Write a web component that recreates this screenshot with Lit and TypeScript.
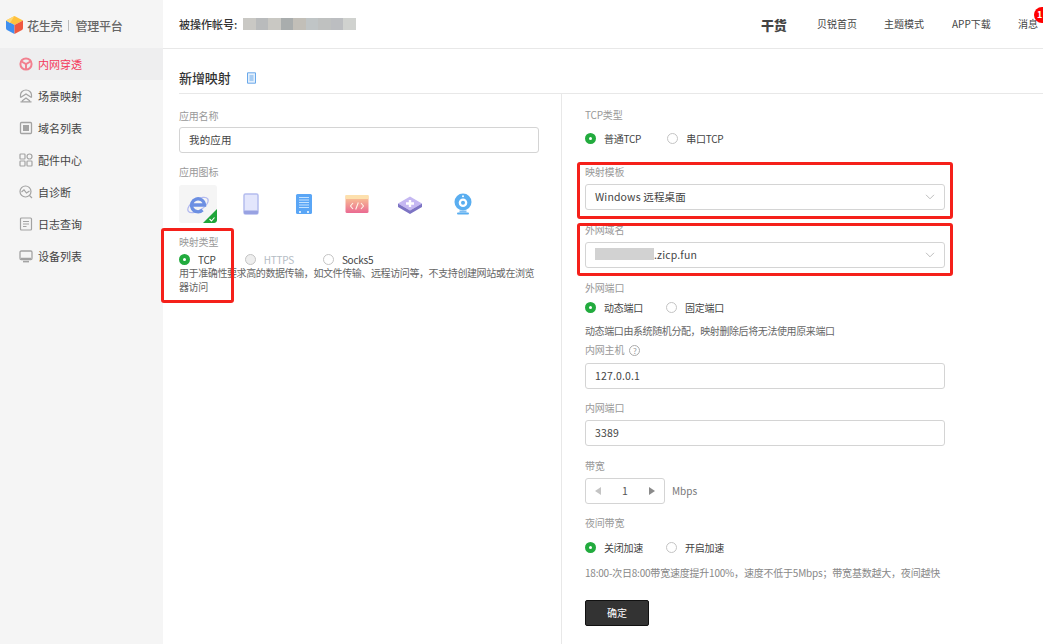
import { LitElement, html, css, svg } from "lit";
import { customElement } from "lit/decorators.js";

const NAV: [string, string, boolean?][] = [
  ["cube", "内网穿透", true],
  ["scene", "场景映射"],
  ["domain", "域名列表"],
  ["parts", "配件中心"],
  ["diag", "自诊断"],
  ["log", "日志查询"],
  ["device", "设备列表"],
];

const COMMA = "\uFF0C";
const SEMI = "\uFF1B";
const HELP_TYPE = `用于准确性要求高的数据传输${COMMA}如文件传输、远程访问等${COMMA}不支持创建网站或在浏览器访问`;
const HELP_PORT = `动态端口由系统随机分配${COMMA}映射删除后将无法使用原来端口`;
const HELP_NIGHT = `18:00-次日8:00带宽速度提升100%${COMMA}速度不低于5Mbps${SEMI}带宽基数越大${COMMA}夜间越快`;

const navIcon = (k: string, active?: boolean) => {
  const c = active ? "#f2808f" : "#a3a3a3";
  const body: Record<string, unknown> = {
    cube: svg`<circle cx="7" cy="7" r="5.6" stroke-width="2"/><path d="M2.5 4.5 7 7l4.5-2.5M7 7v5.5" stroke-width="2"/>`,
    scene: svg`<path d="M1.5 8.5V6A5.5 5 0 0 1 12.5 6v2.500" stroke-width="1.200"/><path d="M1.500 8.500 7 5l5.500 3.500M3 12l4-3 4 3M1.500 12.800h11" stroke-width="1.300"/>`,
    domain: svg`<rect x="1.500" y="1.500" width="11" height="11" rx="1" stroke-width="1.300"/><rect x="4.500" y="4.500" width="5" height="5" fill="${c}" stroke-width="1"/>`,
    parts: svg`<rect x="1" y="1" width="5" height="5" rx=".8" stroke-width="1.200"/><circle cx="10.500" cy="3.500" r="2.500" stroke-width="1.200"/><rect x="1" y="8" width="5" height="5" rx=".8" stroke-width="1.200"/><rect x="8" y="8" width="5" height="5" rx=".8" stroke-width="1.200"/>`,
    diag: svg`<circle cx="6.500" cy="6.500" r="5.500" stroke-width="1.200"/><path d="M2.500 7 5 4.800 7.500 8 10.500 6M10.500 10.500 13 13" stroke-width="1.200"/>`,
    log: svg`<rect x="1.500" y="1" width="11" height="12" rx="1" stroke-width="1.200"/><path d="M4 4.500h6M4 7h6M4 9.500h3.500" stroke-width="1.100"/>`,
    device: svg`<rect x="1" y="2" width="12" height="8.500" rx="1.200" stroke-width="1.300"/><path d="M4 12.600h6" stroke-width="1.600"/><path d="M2 9.500h10" stroke-width="1.500"/>`,
  };
  return html`<svg class="nav-icon" viewBox="0 0 14 14" fill="none" stroke=${c}>${body[k]}</svg>`;
};

const logo = html`<svg class="logo" width="17" height="18" viewBox="0 0 17 18">
  <path d="M8.500 0 17 4.500 8.500 9 0 4.500Z" fill="#ffc13d"/>
  <path d="M0 4.500 8.500 9v9L1 14Q0 13.400 0 12Z" fill="#3f8ff0"/>
  <path d="M17 4.500 8.500 9v9L16 14Q17 13.400 17 12Z" fill="#f0583f"/>
  <path d="M0 4.500 8.500 0 4 7Z" fill="#ffd873"/>
</svg>`;

const appIcons = [
  svg`<rect x="4" y="1" width="14" height="20" rx="1.500" fill="#e3e6fc" stroke="#b4bcee" stroke-width="1.500"/><rect x="4" y="17.500" width="14" height="3.500" rx="1" fill="#98a2e2"/>`,
  svg`<rect x="3" y="1" width="16" height="20" rx="1.500" fill="#5aa6f6"/><path d="M6 4.500h10M6 7h10M6 9.500h10M6 12h10M6 14.500h10" stroke="#c4e2ff" stroke-width="1.200"/><rect x="6" y="18" width="2" height="2" fill="#d5eaff"/><rect x="14" y="18" width="2" height="2" fill="#d5eaff"/>`,
  svg`<defs><linearGradient id="cg" x1="0" y1="0" x2="0" y2="1"><stop offset="0" stop-color="#fbcf94"/><stop offset="1" stop-color="#ea6a92"/></linearGradient></defs><rect x="-.5" y="2" width="23" height="18" rx="1.500" fill="url(#cg)"/><rect x="-.5" y="2" width="23" height="4" fill="#fde0ad"/><path d="M7 10l-2.500 3L7 16M15 10l2.500 3L15 16M12.300 9.500l-2.600 7" fill="none" stroke="#fff3e6" stroke-width="1.100"/>`,
  svg`<path d="M11 3.500 23 10.500 11 17.500-1 10.500Z" fill="#c5b8f2"/><path d="M-1 10.500V14L11 21 23 14V10.500L11 17.500Z" fill="#7d74c4"/><path d="M11 7v7M7 10.500h8" stroke="#fff" stroke-width="2.400"/>`,
  svg`<circle cx="11" cy="9" r="8.500" fill="#5aaef0"/><circle cx="11" cy="9.800" r="4.300" fill="#fff"/><circle cx="11" cy="9.800" r="2" fill="#5aaef0"/><circle cx="11" cy="3.200" r="1" fill="#fff"/><rect x="7.500" y="17.500" width="7" height="2" fill="#7dbdf3"/><rect x="5" y="19.500" width="12" height="2" rx="1" fill="#5aaef0"/>`,
];

const blur = ["#c9c8c4", "#b9bbbc", "#c9c8c3", "#a9adad", "#c2bfb8", "#c0c5c6", "#bfc1c0", "#bcbec1", "#d0d2cf"];
const chevron = html`<svg class="chev" width="10" height="6" viewBox="0 0 10 6" fill="none" stroke="#bdbdbd"><path d="M1 .8 5 4.800 9 .8"/></svg>`;

@customElement("app-root")
export class AppRoot extends LitElement {
  static styles = css`
    :host { display: block; height: 644px; width: 1043px; overflow: hidden; position: relative; background: #fff;
      font-family: "Noto Sans CJK SC", "Noto Sans", sans-serif; font-size: 10px; color: #444; }
    * { box-sizing: border-box; }
    .app { display: flex; height: 644px; }
    aside { width: 163px; flex: none; background: #f5f5f5; }
    .brand { height: 48px; display: flex; align-items: center; padding: 2px 0 0 6px; color: #666; font-size: 12px; font-weight: 500; }
    .brand .n1 { margin-left: 4px; letter-spacing: -.2px; }
    .brand .sep { width: 1px; height: 11px; background: #bbb; margin: 0 6px 0 6px; }
    .brand .n2 { letter-spacing: -.2px; }
    .nav-item { height: 32px; display: flex; align-items: center; padding-left: 19px; gap: 5px; font-size: 11px; color: #444; }
    .nav-item.on { background: #eeeeef; color: #f4385a; }
    .nav-icon { width: 14px; height: 14px; flex: none; }
    main { flex: 1; min-width: 0; display: flex; flex-direction: column; }
    header { height: 49px; flex: none; border-bottom: 1px solid #e8e8e8; display: flex; align-items: center; padding: 0 0 0 16px; position: relative; }
    .acct { font-size: 11px; font-weight: 500; color: #333; white-space: nowrap; }
    .blur { display: flex; height: 12px; margin-left: 6px; filter: blur(.5px); }
    .blur i { width: 12.500px; height: 12px; display: block; }
    .top { margin-left: auto; display: flex; align-items: center; width: 282px; flex: none; padding-left: 0; }
    .gan { font-size: 13px; font-weight: 900; color: #444; width: 56px; letter-spacing: -.2px; }
    .top span.t { color: #444; font-size: 10px; white-space: nowrap; padding-bottom: 2px; }
    .t1 { width: 67px; } .t2 { width: 68px; } .t3 { width: 66px; }
    .badge { position: absolute; left: 871px; top: 7px; width: 16px; height: 16px; border-radius: 50%; background: #f00; color: #fff; font-size: 9px; font-weight: 700; padding-left: 3px; line-height: 16px; }
    .title { height: 45px; flex: none; margin-left: 16px; border-bottom: 1px solid #e8e8e8; display: flex; align-items: center; padding-top: 13px; gap: 15px; font-size: 13px; font-weight: 500; color: #333; letter-spacing: -.1px; }
    .body { flex: 1; display: flex; min-height: 0; }
    .left { width: 399px; flex: none; padding-left: 16px; border-right: 1px solid #e8e8e8; }
    .right { flex: 1; padding-left: 23px; }
    .label { color: #999; height: 14px; line-height: 14px; white-space: nowrap; display: flex; align-items: center; gap: 5px; letter-spacing: -.2px; }
    .input { width: 360px; height: 26px; border: 1px solid #d4d4d4; border-radius: 3px; display: flex; align-items: center; justify-content: space-between; padding: 0 10px 2px 9px; color: #444; font-size: 10.500px; letter-spacing: .15px; }
    .chev { margin-right: -1px; margin-top: 2px; }
    .radios { display: flex; align-items: center; height: 14px; color: #444; letter-spacing: -.25px; }
    .radio { display: flex; align-items: center; gap: 8px; white-space: nowrap; }
    .dot { width: 11px; height: 11px; border-radius: 50%; border: 1px solid #c4c4c4; background: #fff; flex: none; }
    .dot.sel { border: 4px solid #22ab3e; }
    .dot.off { background: #eee; }
    .radio.off { color: #b5bcc4; }
    .help { color: #666; line-height: 14px; letter-spacing: -.4px; }
    .help.night { color: #888; white-space: nowrap; letter-spacing: -.21px; }
    .icons { display: flex; align-items: center; height: 38px; }
    .tile { width: 38px; height: 38px; flex: none; border-radius: 3px; display: flex; align-items: center; justify-content: center; position: relative; overflow: hidden; }
    .tile.sel { background: #f5f5f5; margin-right: 15px; }
    .tile:not(.sel) { margin-right: 15px; }
    .corner { position: absolute; right: 0; bottom: 0; }
    .stepper { width: 80px; height: 26px; border: 1px solid #d4d4d4; border-radius: 3px; display: flex; align-items: center; justify-content: space-between; padding: 0 9px; color: #555; font-size: 10.500px; }
    .stepper b { font-weight: 400; padding-bottom: 2px; }
    .tri { width: 0; height: 0; border-top: 4px solid transparent; border-bottom: 4px solid transparent; }
    .tri.l { border-right: 6px solid #c4c4c4; }
    .tri.r { border-left: 6px solid #8a8a8a; }
    .row { display: flex; align-items: center; gap: 7px; }
    .unit { color: #777; font-size: 10px; padding-bottom: 1px; }
    .btn { width: 64px; height: 26px; background: #333; border: 1px solid #111; border-radius: 2px; color: #fff; display: flex; align-items: center; justify-content: center; font-size: 10px; padding-bottom: 2px; }
    .q { width: 11px; height: 11px; border: 1px solid #aaa; border-radius: 50%; color: #999; font-size: 8px; line-height: 9px; text-align: center; }
    .mark { position: absolute; border: 3px solid #f5201a; border-radius: 3px; pointer-events: none; }
    .m1 { left: 161px; top: 228px; width: 73px; height: 75px; }
    .m2 { left: 577px; top: 162px; width: 376px; height: 57px; }
    .m3 { left: 577px; top: 223px; width: 376px; height: 53px; }
    .sp { display: block; }
    .dblur { display: inline-block; width: 59px; height: 12px; background: #d2d2d2; filter: blur(.7px); }
    .dom { display: flex; align-items: center; }
  `;

  radios(items: [string, string?][], gap: number) {
    return html`<div class="radios" style="gap:${gap}px">
      ${items.map(([t, s]) => html`<div class="radio ${s === "off" ? "off" : ""}"><span class="dot ${s ?? ""}"></span>${t}</div>`)}
    </div>`;
  }

  gap(h: number) { return html`<div class="sp" style="height:${h}px"></div>`; }

  render() {
    return html`<div class="app">
      <aside>
        <div class="brand">${logo}<span class="n1">花生壳</span><span class="sep"></span><span class="n2">管理平台</span></div>
        ${NAV.map(([k, t, on]) => html`<div class="nav-item ${on ? "on" : ""}">${navIcon(k, on)}<span>${t}</span></div>`)}
      </aside>
      <main>
        <header>
          <span class="acct">被操作帐号:</span>
          <div class="blur">${blur.map((c) => html`<i style="background:${c}"></i>`)}</div>
          <div class="top">
            <span class="gan">干货</span>
            <span class="t t1">贝锐首页</span><span class="t t2">主题模式</span><span class="t t3">APP下载</span><span class="t">消息</span>
          </div>
          <span class="badge">1</span>
        </header>
        <div class="title">
          <span>新增映射</span>
          <svg width="11" height="12" viewBox="0 0 11 12" fill="none" stroke="#6aa9ea"><path d="M1.500.8h8v10.400h-8z" fill="#e4f0fc"/><path d="M3.500 4h4M3.500 6h4M3.500 8h4"/></svg>
        </div>
        <div class="body">
          <div class="left">
            ${this.gap(15)}
            <div class="label">应用名称</div>
            ${this.gap(4)}
            <div class="input">我的应用</div>
            ${this.gap(12)}
            <div class="label">应用图标</div>
            ${this.gap(6)}
            <div class="icons">
              <div class="tile sel">
                <svg width="24" height="24" viewBox="0 0 24 24" fill="none">
                  <ellipse cx="12" cy="13" rx="11.500" ry="5.500" transform="rotate(-32 12 13)" stroke="#b4bbf0" stroke-width="1.300"/>
                  <path d="M5.500 13h13A6.500 6.500 0 1 0 16.500 18" stroke="#6c8fe2" stroke-width="3.300"/>
                </svg>
                <svg class="corner" width="14" height="14" viewBox="0 0 14 14"><path d="M14 0V12Q14 14 12 14H0Z" fill="#1fa53a"/><path d="M6.500 10 8.500 12 11.500 8.500" fill="none" stroke="#fff" stroke-width="1.100"/></svg>
              </div>
              ${appIcons.map((p) => html`<div class="tile"><svg width="22" height="22" viewBox="0 0 22 22" style="overflow:visible">${p}</svg></div>`)}
            </div>
            ${this.gap(12)}
            <div class="label">映射类型</div>
            ${this.gap(3)}
            ${this.radios([["TCP", "sel"], ["HTTPS", "off"], ["Socks5"]], 29)}
            <div class="help" style="width:360px">${HELP_TYPE}</div>
          </div>
          <div class="right">
            ${this.gap(14)}
            <div class="label">TCP类型</div>
            ${this.gap(9)}
            ${this.radios([["普通TCP", "sel"], ["串口TCP"]], 26)}
            ${this.gap(20)}
            <div class="label">映射模板</div>
            ${this.gap(5)}
            <div class="input">Windows 远程桌面${chevron}</div>
            ${this.gap(13)}
            <div class="label">外网域名</div>
            ${this.gap(5)}
            <div class="input"><span class="dom"><span class="dblur"></span>.zicp.fun</span>${chevron}</div>
            ${this.gap(13)}
            <div class="label">外网端口</div>
            ${this.gap(5)}
            ${this.radios([["动态端口", "sel"], ["固定端口"]], 23)}
            ${this.gap(10)}
            <div class="help">${HELP_PORT}</div>
            ${this.gap(5)}
            <div class="label">内网主机 <span class="q">?</span></div>
            ${this.gap(6)}
            <div class="input">127.0.0.1</div>
            ${this.gap(12)}
            <div class="label">内网端口</div>
            ${this.gap(5)}
            <div class="input">3389</div>
            ${this.gap(13)}
            <div class="label">带宽</div>
            ${this.gap(5)}
            <div class="row"><div class="stepper"><i class="tri l"></i><b>1</b><i class="tri r"></i></div><span class="unit">Mbps</span></div>
            ${this.gap(12)}
            <div class="label">夜间带宽</div>
            ${this.gap(10)}
            ${this.radios([["关闭加速", "sel"], ["开启加速"]], 23)}
            ${this.gap(12)}
            <div class="help night">${HELP_NIGHT}</div>
            ${this.gap(20)}
            <div class="btn">确定</div>
          </div>
        </div>
      </main>
      <div class="mark m1"></div><div class="mark m2"></div><div class="mark m3"></div>
    </div>`;
  }
}
